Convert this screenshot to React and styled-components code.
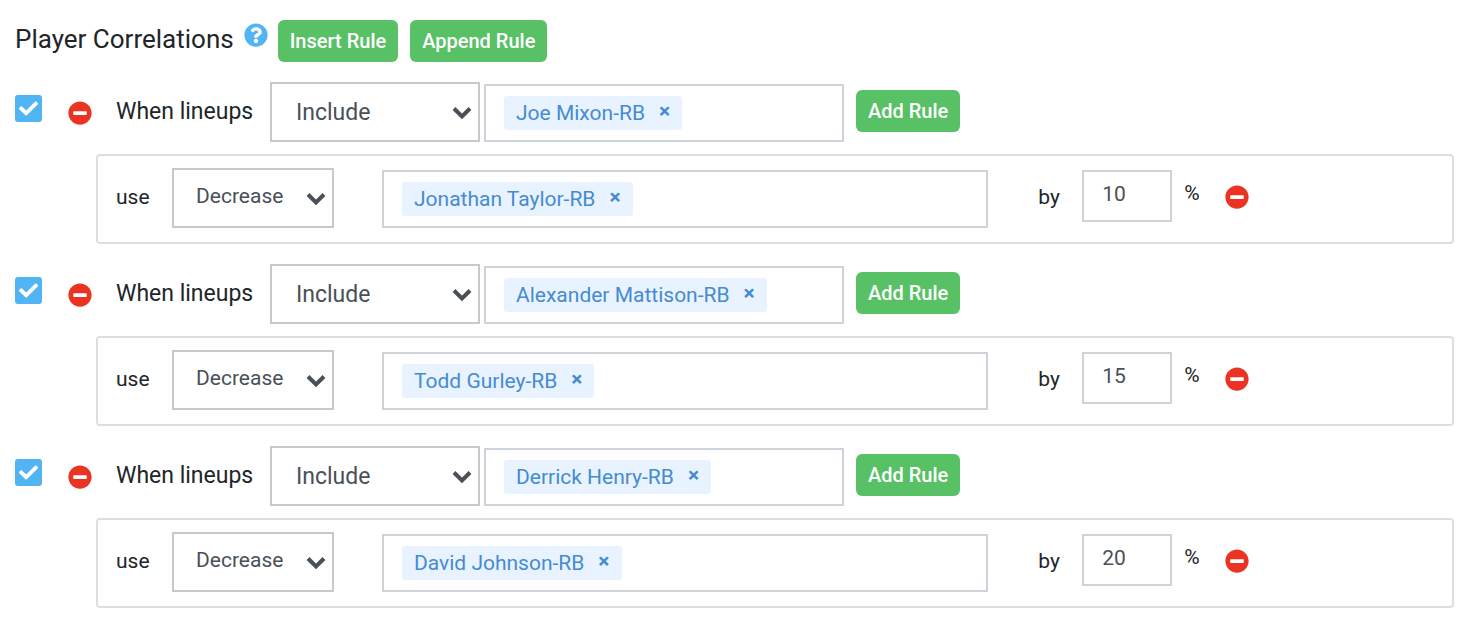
import React, { useState } from 'react';
import styled, { createGlobalStyle } from 'styled-components';
import { FaCheck, FaMinusCircle, FaQuestionCircle } from 'react-icons/fa';

const GlobalStyle = createGlobalStyle`
  * {
    box-sizing: border-box;
  }
  body {
    margin: 0;
    background: #fff;
    color: #212529;
    font-family: Roboto, sans-serif;
    font-size: 21px;
  }
  button, input, select {
    font-family: inherit;
    margin: 0;
  }
`;

const Page = styled.main`
  padding: 20px 14px 22px 15px;
`;

const Header = styled.header`
  display: flex;
  align-items: center;
  gap: 10px;
  margin-bottom: 20px;
`;

const HeaderButtons = styled.div`
  display: flex;
  gap: 12px;
`;

const Title = styled.h1`
  margin: 0;
  padding-bottom: 4px;
  font-size: 26px;
  font-weight: 400;
  line-height: 34px;
`;

const IconButton = styled.button`
  display: flex;
  flex: none;
  padding: 0;
  border: 0;
  background: none;
  color: ${props => props.$color};
  font-size: 24px;
  cursor: pointer;
`;

const HelpButton = styled(IconButton)`
  margin-bottom: 12px;
`;

const RemoveRule = styled(IconButton)`
  margin-top: 2px;
`;

const RemoveEffect = styled(IconButton)`
  margin-bottom: 2px;
`;

const GreenButton = styled.button`
  flex: none;
  height: 42px;
  padding: 0 12px;
  border: 0;
  border-radius: 6px;
  background: #58c165;
  color: #fff;
  font-size: 20px;
  font-weight: 500;
  cursor: pointer;
`;

const AddButton = styled(GreenButton)`
  margin: 0 0 2px 12px;
`;

const RuleList = styled.div`
  display: flex;
  flex-direction: column;
  gap: 20px;
`;

const RuleRow = styled.div`
  display: flex;
  align-items: center;
  margin-bottom: 12px;
`;

const CheckWrap = styled.span`
  position: relative;
  display: flex;
  flex: none;
  margin: 0 26px 8px 0;
  svg {
    position: absolute;
    top: 4px;
    left: 4px;
    color: #fff;
    font-size: 19px;
    pointer-events: none;
  }
`;

const CheckInput = styled.input`
  appearance: none;
  width: 27px;
  height: 27px;
  border: 2px solid #51b5f4;
  border-radius: 3px;
  background: #fff;
  &:checked {
    background: #51b5f4;
  }
`;

const RowLabel = styled.label`
  flex: none;
  width: ${props => props.$width}px;
  margin-left: ${props => props.$gap || 0}px;
  padding-bottom: ${props => (props.$large ? 0 : 2)}px;
  font-size: ${props => (props.$large ? 23 : 21)}px;
  line-height: 30px;
`;

const SelectWrap = styled.div`
  position: relative;
  flex: none;
  width: ${props => props.$width}px;
  svg {
    position: absolute;
    top: 23px;
    right: 8px;
    pointer-events: none;
  }
`;

const SelectBox = styled.select`
  appearance: none;
  display: block;
  width: 100%;
  height: 60px;
  padding: ${props => (props.$large ? '0 32px 0 24px' : '0 32px 4px 22px')};
  border: 2px solid #c9c9c9;
  border-radius: 0;
  background: #fff;
  color: #495057;
  font-size: ${props => (props.$large ? 23 : 21)}px;
`;

const TagBox = styled.div`
  display: flex;
  align-items: flex-start;
  align-self: flex-end;
  flex: 0 1 ${props => props.$basis};
  height: 58px;
  margin-left: ${props => props.$gap}px;
  padding: 10px 18px;
  border: 2px solid #ced4da;
`;

const Tag = styled.span`
  display: flex;
  flex: none;
  align-items: center;
  gap: 14px;
  height: 34px;
  padding: 0 12px;
  border-radius: 3px;
  background: #e9f3ff;
  color: #458bd1;
  line-height: 34px;
  white-space: nowrap;
  button {
    padding: 0 0 4px;
    border: 0;
    background: none;
    color: inherit;
    font-size: 21px;
    font-weight: 700;
    line-height: 30px;
    cursor: pointer;
  }
`;

const TagEntry = styled.input`
  flex: 1;
  width: 0;
  min-width: 0;
  height: 34px;
  padding: 0 8px;
  border: 0;
  outline: 0;
  font-size: 21px;
`;

const EffectRow = styled.div`
  display: flex;
  align-items: center;
  height: 90px;
  margin-left: 81px;
  padding: 12px 18px 14px;
  border: 2px solid #dedede;
  border-radius: 4px;
`;

const PercentInput = styled.input`
  flex: none;
  align-self: flex-start;
  width: 90px;
  height: 52px;
  margin-top: 2px;
  padding: 0 18px 4px;
  border: 2px solid #ced4da;
  border-radius: 0;
  color: #495057;
  font-size: 21px;
`;

const Unit = styled.span`
  margin: 0 25px 10px 12px;
  line-height: 30px;
`;

const initialRules = [
  { id: 1, player: 'Joe Mixon-RB', target: 'Jonathan Taylor-RB', percent: '10' },
  { id: 2, player: 'Alexander Mattison-RB', target: 'Todd Gurley-RB', percent: '15' },
  { id: 3, player: 'Derrick Henry-RB', target: 'David Johnson-RB', percent: '20' },
];

function Select({ id, width, large, options }) {
  return (
    <SelectWrap $width={width}>
      <SelectBox id={id} $large={large}>
        {options.map(option => <option key={option}>{option}</option>)}
      </SelectBox>
      <svg width="20" height="16" viewBox="0 0 20 16" aria-hidden="true">
        <path d="M2 3.5 L10 11.5 L18 3.5" fill="none" stroke="#495057" strokeWidth="4" />
      </svg>
    </SelectWrap>
  );
}

function PlayerTags({ name, label, basis, gap }) {
  return (
    <TagBox $basis={basis} $gap={gap}>
      <Tag>
        {name}
        <button type="button" aria-label={`Remove ${name}`}>×</button>
      </Tag>
      <TagEntry type="text" aria-label={label} />
    </TagBox>
  );
}

function Rule({ rule }) {
  const [enabled, setEnabled] = useState(true);
  const [percent, setPercent] = useState(rule.percent);

  return (
    <section>
      <RuleRow>
        <CheckWrap>
          <CheckInput
            type="checkbox"
            aria-label="Rule enabled"
            checked={enabled}
            onChange={e => setEnabled(e.target.checked)}
          />
          {enabled && <FaCheck />}
        </CheckWrap>
        <RemoveRule type="button" $color="#ea3323" aria-label="Remove rule"><FaMinusCircle /></RemoveRule>
        <RowLabel htmlFor={`when-${rule.id}`} $width={154} $gap={24} $large>When lineups</RowLabel>
        <Select id={`when-${rule.id}`} width={210} large options={['Include', 'Exclude']} />
        <PlayerTags name={rule.player} label="Lineup players" basis="360px" gap={4} />
        <AddButton type="button">Add Rule</AddButton>
      </RuleRow>
      <EffectRow>
        <RowLabel htmlFor={`use-${rule.id}`} $width={56}>use</RowLabel>
        <Select id={`use-${rule.id}`} width={162} options={['Decrease', 'Increase']} />
        <PlayerTags name={rule.target} label="Affected players" basis="46%" gap={48} />
        <RowLabel htmlFor={`by-${rule.id}`} $width={44} $gap={50}>by</RowLabel>
        <PercentInput
          id={`by-${rule.id}`}
          type="text"
          inputMode="numeric"
          value={percent}
          onChange={e => setPercent(e.target.value)}
        />
        <Unit>%</Unit>
        <RemoveEffect type="button" $color="#ea3323" aria-label="Remove effect"><FaMinusCircle /></RemoveEffect>
      </EffectRow>
    </section>
  );
}

function App() {
  return (
    <>
      <GlobalStyle />
      <Page>
        <Header>
          <Title>Player Correlations</Title>
          <HelpButton type="button" $color="#51b5f4" aria-label="Help"><FaQuestionCircle /></HelpButton>
          <HeaderButtons>
            <GreenButton type="button">Insert Rule</GreenButton>
            <GreenButton type="button">Append Rule</GreenButton>
          </HeaderButtons>
        </Header>
        <RuleList>
          {initialRules.map(rule => <Rule key={rule.id} rule={rule} />)}
        </RuleList>
      </Page>
    </>
  );
}

export default App;
